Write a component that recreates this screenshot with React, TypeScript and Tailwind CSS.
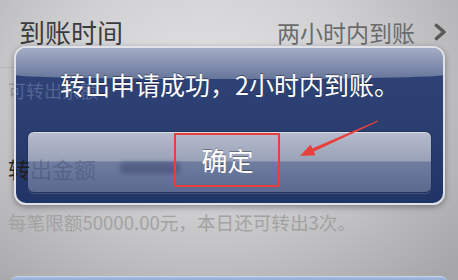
import React from "react";

const font = { fontFamily: '"Noto Sans CJK SC", "Noto Sans", sans-serif' };

export default function App() {
  return (
    <div
      className="relative w-[458px] h-[280px] overflow-hidden bg-[radial-gradient(ellipse_75%_95%_at_45%_30%,#e3e3e5_0%,#d0d0d2_45%,#a6a6a8_100%)]"
      style={font}
    >
      {/* Row 1 */}
      <div className="flex items-start justify-between h-[68px] pl-[19px] pr-[11px] pt-[18px] border-b border-[#b9b9bb]">
        <span className="text-[26px] leading-[28px] text-[#3b3b3b]">到账时间</span>
        <div className="flex items-center gap-[19px] h-[28px]">
          <span className="text-[23px] leading-[28px] text-[#6b6b6b]">两小时内到账</span>
          <svg width="13" height="18" viewBox="0 0 13 18">
            <polyline points="2.5,2.5 10,9 2.5,15.5" fill="none" stroke="#5a5a5a" strokeWidth="3.6" strokeLinecap="round" strokeLinejoin="round" />
          </svg>
        </div>
      </div>
      {/* Row 2 */}
      <div className="pl-[8px] mt-[10px] text-[18px] leading-[24px] text-[#9c9c9c]">可转出余额</div>
      {/* Row 3 */}
      <div className="flex items-center pl-[8px] mt-[51px] h-[30px]">
        <span className="text-[22px] leading-[30px] text-[#2e2e2e]">转出金额</span>
        <div className="ml-[24px] w-[60px] h-[12px] rounded-sm bg-[#8a8a8e] blur-[2px]" />
      </div>
      {/* Hint */}
      <div className="pl-[8px] mt-[27px] text-[18.6px] leading-[24px] text-[#a2a2a2]">
        每笔限额50000.00元，本日还可转出3次。
      </div>
      {/* Bottom button top */}
      <div className="mx-[11px] mt-[42px] h-[20px] rounded-t-[6px] border-t border-[#c4d3ea] bg-[linear-gradient(to_bottom,#a9bddf_0%,#7c93bc_40%,#6a82ae_100%)]" />

      {/* Dialog */}
      <div className="absolute left-[14px] top-[46px] w-[431px] h-[159px] rounded-[12px] border-2 border-[#dfe2e9] shadow-[0_2px_6px_rgba(0,0,0,0.35)] overflow-hidden bg-[linear-gradient(to_bottom,#30447a_0%,#2b3e70_50%,#213466_100%)] flex flex-col px-[11px]">
        {/* gloss */}
        <div className="absolute left-0 right-0 top-0 h-[31px] rounded-bl-[50%_4px] rounded-br-[50%_4px] bg-[linear-gradient(to_bottom,rgba(255,255,255,0.56)_0%,rgba(255,255,255,0.42)_50%,rgba(255,255,255,0.27)_100%)]" />
        <div className="relative h-[83px] pt-[24px] text-center text-[25px] leading-[24px] text-white [text-shadow:0_-1px_0_rgba(0,0,0,0.4)]">
          转出申请成功，2小时内到账。
        </div>
        <div className="relative h-[62px] rounded-[7px] border border-[#24335e] shadow-[inset_0_1px_0_rgba(255,255,255,0.5),0_1px_0_rgba(255,255,255,0.15)] bg-[linear-gradient(to_bottom,#b6bccd_0%,#9aa2b8_48%,#6e7da0_50%,#5a6a90_100%)] flex items-center justify-center">
          <span className="text-[26px] leading-[30px] text-white -mt-[4px] -ml-[4px] [text-shadow:0_-1px_0_rgba(0,0,0,0.35)]">确定</span>
        </div>
        {/* ghosts of page content */}
        <div className="absolute left-[-8px] top-[30px] text-[18px] leading-[24px] text-[rgba(190,200,225,0.28)]">可转出余额</div>
        <div className="absolute left-[-8px] top-[105px] flex items-center h-[30px]">
          <span className="text-[22px] leading-[30px] text-[#1e1e1e]">转</span>
          <span className="text-[22px] leading-[30px] text-[rgba(50,60,95,0.32)]">出金额</span>
          <div className="ml-[24px] w-[60px] h-[12px] rounded-sm bg-[rgba(40,50,85,0.35)] blur-[2px]" />
        </div>
        {/* red annotation box */}
        <div className="absolute left-[158px] top-[85px] w-[106px] h-[54px] border-2 border-[#e63f3d]" />
      </div>

      {/* red arrow */}
      <svg className="absolute left-0 top-0" width="458" height="280" viewBox="0 0 458 280">
        <polygon points="378.2,121.4 377.8,120.6 312.2,148.6 313.4,151.8" fill="#e8403c" />
        <polygon points="300,156 315.4,155.2 310.6,144.6" fill="#e8403c" />
      </svg>
    </div>
  );
}
